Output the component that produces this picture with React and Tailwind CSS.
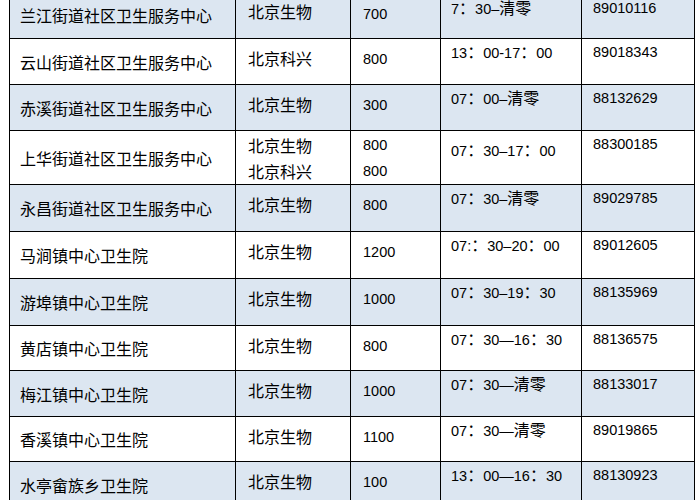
import React from 'react';

const rows = [
  { name: '兰江街道社区卫生服务中心', vendor: ['北京生物'], qty: ['700'], time: '7：30–清零', phone: '89010116', h: 'h-[47px]', blue: true, first: true },
  { name: '云山街道社区卫生服务中心', vendor: ['北京科兴'], qty: ['800'], time: '13：00-17：00', phone: '89018343', h: 'h-[46px]' },
  { name: '赤溪街道社区卫生服务中心', vendor: ['北京生物'], qty: ['300'], time: '07：00–清零', phone: '88132629', h: 'h-[46px]', blue: true },
  { name: '上华街道社区卫生服务中心', vendor: ['北京生物', '北京科兴'], qty: ['800', '800'], time: '07：30–17：00', phone: '88300185', h: 'h-[54px]', double: true },
  { name: '永昌街道社区卫生服务中心', vendor: ['北京生物'], qty: ['800'], time: '07：30–清零', phone: '89029785', h: 'h-[47px]', blue: true },
  { name: '马涧镇中心卫生院', vendor: ['北京生物'], qty: ['1200'], time: '07:：30–20：00', phone: '89012605', h: 'h-[47px]' },
  { name: '游埠镇中心卫生院', vendor: ['北京生物'], qty: ['1000'], time: '07：30–19：30', phone: '88135969', h: 'h-[47px]', blue: true },
  { name: '黄店镇中心卫生院', vendor: ['北京生物'], qty: ['800'], time: '07：30—16：30', phone: '88136575', h: 'h-[45px]' },
  { name: '梅江镇中心卫生院', vendor: ['北京生物'], qty: ['1000'], time: '07：30—清零', phone: '88133017', h: 'h-[46px]', blue: true },
  { name: '香溪镇中心卫生院', vendor: ['北京生物'], qty: ['1100'], time: '07：30—清零', phone: '89019865', h: 'h-[45px]' },
  { name: '水亭畲族乡卫生院', vendor: ['北京生物'], qty: ['100'], time: '13：00—16：30', phone: '88130923', h: 'h-[46px]', blue: true },
];

const latin = { fontFamily: '"Liberation Sans", "Noto Sans CJK SC", sans-serif' };

// CJK chars (incl. full-width colon) a bit larger than the digits
const Mixed = ({ text }) =>
  text.split(/([\u3000-\u9fff\uff00-\uffef]+)/).map((part, i) =>
    /[\u3000-\u9fff\uff00-\uffef]/.test(part) ? (
      <span key={i} className="text-[16px]">{part}</span>
    ) : (
      <span key={i}>{part}</span>
    )
  );

const App = () => {
  return (
    <div className="min-h-screen bg-white overflow-hidden">
      <div
        className="-mt-[8px] ml-[9px] w-[686px] border-l border-black text-black"
        style={{ fontFamily: '"Noto Sans CJK SC", sans-serif' }}
      >
        {rows.map((r) => {
          let qtyPad = r.double ? 'pt-[1px]' : 'pt-[7px]';
          let timePad = r.double ? 'pt-[7px]' : 'pt-[1px]';
          let phonePad = 'pt-0';
          if (r.first) {
            qtyPad = 'pt-[9px]';
            timePad = 'pt-[4px]';
            phonePad = 'pt-[3px]';
          }
          return (
            <div
              key={r.name}
              className={`flex border-b border-black ${r.h} ${r.blue ? 'bg-[#dce6f1]' : 'bg-white'}`}
            >
              <div className="w-[226px] border-r border-black flex items-center pl-[10px] text-[16px] leading-[26px]">
                {r.name}
              </div>
              <div className={`w-[115px] border-r border-black pl-[12px] text-[16px] leading-[26px] ${r.double ? 'pt-[1px]' : 'pt-[6px]'}`}>
                {r.vendor.map((v) => (
                  <div key={v}>{v}</div>
                ))}
              </div>
              <div
                className={`w-[90px] border-r border-black pl-[12px] text-[14.5px] leading-[26px] ${qtyPad}`}
                style={latin}
              >
                {r.qty.map((q, i) => (
                  <div key={i}>{q}</div>
                ))}
              </div>
              <div
                className={`w-[141px] border-r border-black pl-[10px] text-[14.5px] leading-[26px] whitespace-nowrap ${timePad}`}
                style={latin}
              >
                <Mixed text={r.time} />
              </div>
              <div
                className={`w-[113px] border-r border-black pl-[11px] text-[14.5px] leading-[26px] ${phonePad}`}
                style={latin}
              >
                {r.phone}
              </div>
            </div>
          );
        })}
      </div>
    </div>
  );
};

export default App;
